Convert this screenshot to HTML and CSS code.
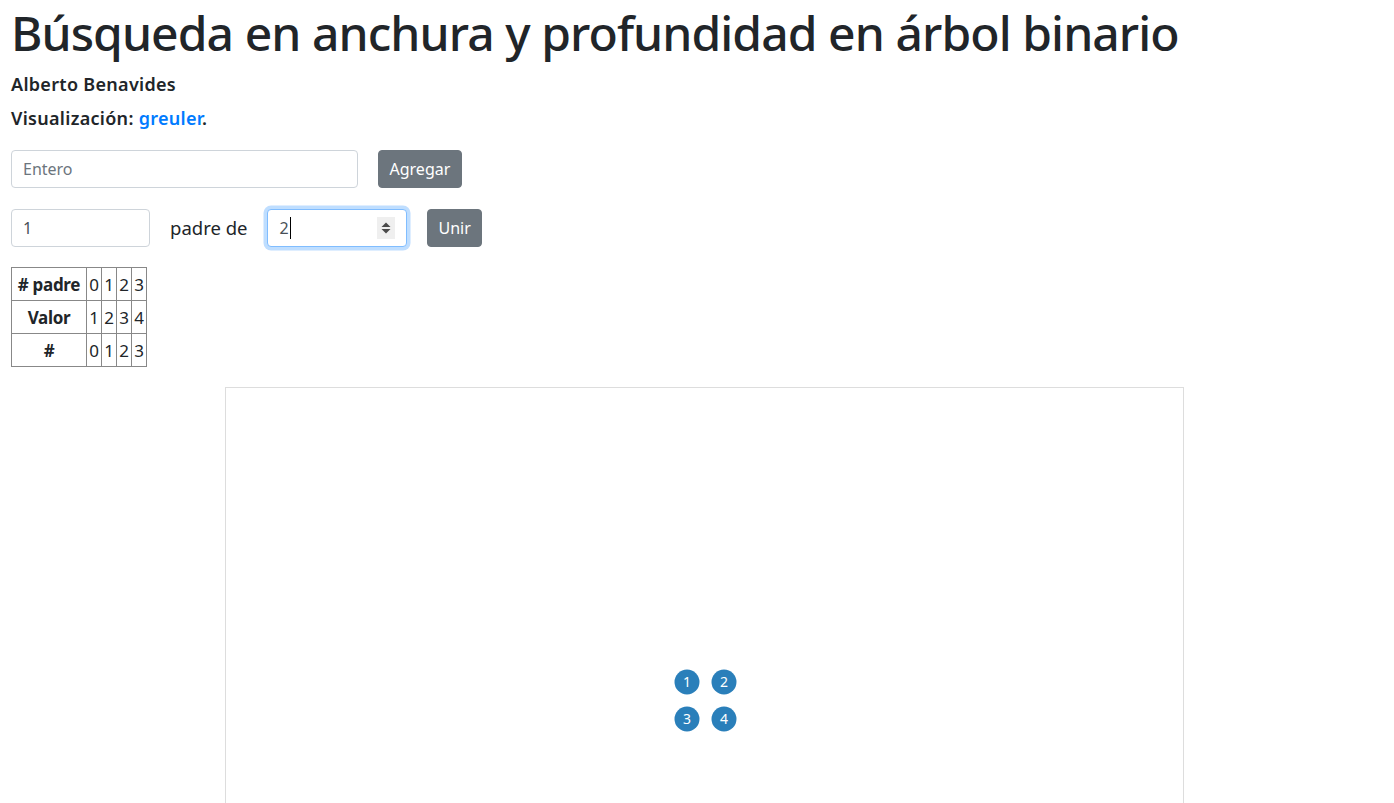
FILE: index.html
```html
<!DOCTYPE html>
<html lang="es">
<head>
<meta charset="utf-8">
<title>Búsqueda en anchura y profundidad en árbol binario</title>
<link rel="stylesheet" href="styles.css">
</head>
<body>
<div class="page">
  <h1 class="title">Búsqueda en anchura y profundidad en árbol binario</h1>
  <p class="meta">Alberto Benavides</p>
  <p class="meta">Visualización: <a href="#" class="link">greuler</a>.</p>

  <div class="row">
    <input class="field field-wide" type="text" placeholder="Entero">
    <button class="btn">Agregar</button>
  </div>

  <div class="row">
    <input class="field field-short" type="text" value="1">
    <span class="label">padre de</span>
    <div class="field field-num focused">
      <span class="num-value">2</span><span class="caret"></span>
      <span class="spinner">
        <svg width="12" height="16" viewBox="0 0 12 16"><path d="M1.5 7 L6 2.5 L10.5 7 Z" fill="#4a4a4a"/><path d="M1.5 9 L6 13.5 L10.5 9 Z" fill="#4a4a4a"/></svg>
      </span>
    </div>
    <button class="btn btn-small">Unir</button>
  </div>

  <table class="data">
    <tr><th># padre</th><td>0</td><td>1</td><td>2</td><td>3</td></tr>
    <tr><th>Valor</th><td>1</td><td>2</td><td>3</td><td>4</td></tr>
    <tr><th>#</th><td>0</td><td>1</td><td>2</td><td>3</td></tr>
  </table>

  <div class="graph">
    <svg class="graph-svg" width="957" height="626" viewBox="0 0 957 626">
      <g class="node"><circle cx="461" cy="294" r="12.5"/><text x="461" y="299">1</text></g>
      <g class="node"><circle cx="498" cy="294" r="12.5"/><text x="498" y="299">2</text></g>
      <g class="node"><circle cx="461" cy="331" r="12.5"/><text x="461" y="336">3</text></g>
      <g class="node"><circle cx="498" cy="331" r="12.5"/><text x="498" y="336">4</text></g>
    </svg>
  </div>
</div>
</body>
</html>
```

FILE: styles.css
```css
html, body {
  margin: 0;
  padding: 0;
  background: #fff;
}
body {
  font-family: "Noto Sans", "Open Sans", "DejaVu Sans", sans-serif;
  color: #212529;
  font-size: 16px;
  line-height: 1.5;
}
.page {
  padding: 0 11px;
}
.title {
  margin: 0;
  padding-top: 4px;
  font-size: 48px;
  font-weight: 500;
  line-height: 58px;
  letter-spacing: -0.92px;
  white-space: nowrap;
}
.meta {
  margin: 0;
  font-size: 18px;
  font-weight: 600;
  line-height: 34px;
  letter-spacing: 0.3px;
}
.meta:first-of-type {
  margin-top: 5px;
}
.link {
  color: #007bff;
  text-decoration: none;
}
.row {
  display: flex;
  align-items: center;
  gap: 20px;
  margin-top: 20px;
}
.row + .row {
  margin-top: 21px;
}
.meta + .row {
  margin-top: 15px;
}
.field {
  box-sizing: border-box;
  height: 38px;
  padding: 6px 11px;
  font-family: inherit;
  font-size: 16px;
  color: #495057;
  background: #fff;
  border: 1px solid #ced4da;
  border-radius: 4px;
  outline: none;
}
.field::placeholder {
  color: #6c757d;
}
.field-wide { width: 347px; }
.field-short { width: 139px; }
.field-num {
  width: 140px;
  display: flex;
  align-items: center;
  padding-right: 11px;
}
.focused {
  border-color: #80bdff;
  box-shadow: 0 0 0 3.5px rgba(0, 123, 255, 0.25);
}
.num-value {
  color: #495057;
}
.caret {
  display: inline-block;
  width: 1px;
  height: 22px;
  background: #000;
  margin-left: 1px;
}
.spinner {
  margin-left: auto;
  width: 18px;
  height: 22px;
  background: #efefef;
  display: flex;
  align-items: center;
  justify-content: center;
}
.label {
  font-size: 18.5px;
}
.btn {
  box-sizing: border-box;
  height: 38px;
  padding: 0 10.5px;
  font-family: inherit;
  font-size: 16px;
  color: #fff;
  background: #6c757d;
  border: 1px solid #6c757d;
  border-radius: 4px;
}
.btn-small {
  padding: 0 10px;
}
.data {
  margin-top: 20px;
  border-collapse: collapse;
  border: 1px solid #000;
}
.data th, .data td {
  border: 1px solid #888;
  height: 32px;
  padding: 0;
  font-size: 17px;
  line-height: 1;
  text-align: center;
}
.data th {
  width: 74px;
  font-weight: 700;
  letter-spacing: -0.3px;
}
.data td {
  width: 14px;
  font-weight: 400;
}
.graph {
  box-sizing: border-box;
  width: 959px;
  height: 628px;
  margin: 20px 0 0 214px;
  border: 1px solid #ddd;
}
.graph-svg {
  display: block;
}
.node circle {
  fill: #2a7fba;
}
.node text {
  fill: #fff;
  font-size: 14px;
  text-anchor: middle;
  font-family: "Noto Sans", sans-serif;
}
```
